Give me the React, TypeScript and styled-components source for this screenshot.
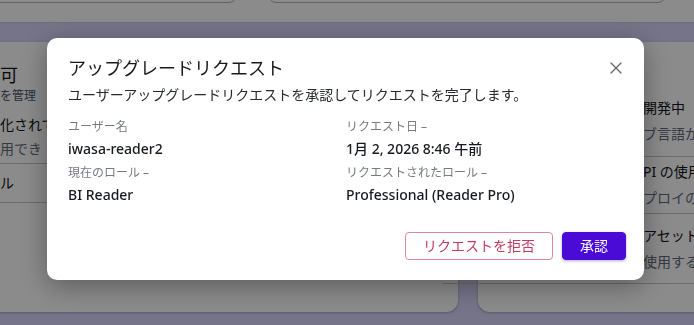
import React from "react";
import styled, { createGlobalStyle } from "styled-components";

const Global = createGlobalStyle`
  html, body { margin: 0; padding: 0; }
  body {
    width: 694px;
    height: 325px;
    overflow: hidden;
    background: #d8d5fb;
    font-family: "Noto Sans", "Noto Sans CJK JP", sans-serif;
  }
`;

const Page = styled.div`
  width: 694px;
  height: 325px;
  overflow: hidden;
  display: flex;
  flex-direction: column;
`;

const Header = styled.div`
  height: 23px;
  box-sizing: border-box;
  flex-shrink: 0;
  background: #ffffff;
  border-bottom: 1px solid #c9c9d0;
  display: flex;
  align-items: flex-end;
  gap: 31px;
  padding: 0 0 19px 0;
  margin-left: -20px;
`;

const HeaderInput = styled.div<{ $w: number }>`
  width: ${(p) => p.$w}px;
  height: 30px;
  flex-shrink: 0;
  box-sizing: border-box;
  border: 1px solid #b4b4bb;
  border-radius: 8px;
`;

const Cards = styled.div`
  display: flex;
  gap: 20px;
  margin-top: 19px;
  height: 270px;
`;

const Card = styled.div<{ $w: number; $shift?: number; $pad: number }>`
  width: ${(p) => p.$w}px;
  flex-shrink: 0;
  margin-left: ${(p) => p.$shift || 0}px;
  background: #ffffff;
  border-radius: 12px;
  box-shadow: 0 1px 3px rgba(0, 0, 0, 0.25);
  padding-left: ${(p) => p.$pad}px;
  box-sizing: border-box;
  display: flex;
  flex-direction: column;
`;

const CardTitle = styled.div<{ $top: number }>`
  margin-top: ${(p) => p.$top}px;
  font-size: 18px;
  line-height: 24px;
  color: #0f141a;
  white-space: nowrap;
`;

const CardSub = styled.div`
  font-size: 12px;
  line-height: 18px;
  color: #4b5563;
  white-space: nowrap;
`;

const Row = styled.div<{ $h: number; $first?: number; $gap?: number }>`
  height: ${(p) => p.$h}px;
  margin-top: ${(p) => p.$first || 0}px;
  margin-left: -200px;
  padding-left: 200px;
  border-bottom: 1px solid #c6c6cd;
  display: flex;
  flex-direction: column;
  justify-content: center;
  gap: ${(p) => p.$gap ?? 4}px;
  white-space: nowrap;
  overflow: hidden;
`;

const RowName = styled.div`
  font-size: 14px;
  line-height: 22px;
  color: #0f141a;
`;

const RowDesc = styled.div`
  font-size: 14px;
  line-height: 22px;
  color: #5f6b7a;
`;

const Overlay = styled.div`
  position: fixed;
  inset: 0;
  background: rgba(0, 0, 0, 0.455);
  display: flex;
  justify-content: center;
  align-items: flex-start;
  padding-top: 38px;
`;

const Modal = styled.div`
  width: 597px;
  margin-left: -3px;
  box-sizing: border-box;
  background: #ffffff;
  border-radius: 10px;
  box-shadow: 0 6px 28px rgba(0, 0, 0, 0.35);
  padding: 17px 18px 20px 21px;
  display: flex;
  flex-direction: column;
`;

const ModalHeader = styled.div`
  display: flex;
  justify-content: space-between;
  align-items: center;
`;

const Title = styled.h2`
  margin: 0;
  font-size: 18px;
  line-height: 26px;
  font-weight: 400;
  color: #16191f;
`;

const CloseButton = styled.button`
  border: 0;
  background: none;
  padding: 0;
  width: 16px;
  height: 16px;
  margin-right: 2px;
  display: flex;
  align-items: center;
  justify-content: center;
  color: #5f6368;
  cursor: pointer;
`;

const Subtitle = styled.p`
  margin: 4px 0 0;
  font-size: 14px;
  line-height: 20px;
  color: #262a30;
`;

const Details = styled.div`
  margin-top: 12px;
  display: grid;
  grid-template-columns: 278px 1fr;
  row-gap: 2px;
`;

const Field = styled.div`
  display: flex;
  flex-direction: column;
`;

const Label = styled.div`
  font-size: 12px;
  line-height: 20px;
  color: #767b82;
`;

const Value = styled.div`
  font-size: 14px;
  line-height: 24px;
  font-weight: 500;
  color: #16191f;
`;

const Actions = styled.div`
  margin-top: 25px;
  display: flex;
  justify-content: flex-end;
  gap: 9px;
`;

const Button = styled.button<{ $primary?: boolean }>`
  height: 28px;
  box-sizing: border-box;
  padding: 0 17px;
  border-radius: 4px;
  font-family: inherit;
  font-size: 14px;
  line-height: 20px;
  cursor: pointer;
  border: 1px solid ${(p) => (p.$primary ? "#4b0bd6" : "#d9899c")};
  background: ${(p) => (p.$primary ? "#4b0bd6" : "#ffffff")};
  color: ${(p) => (p.$primary ? "#ffffff" : "#c23a5e")};
  box-shadow: ${(p) => (p.$primary ? "0 1px 3px rgba(40, 0, 120, 0.35)" : "none")};
`;

export default function App() {
  return (
    <>
      <Global />
      <Page>
        <Header>
          <HeaderInput $w={257} />
          <HeaderInput $w={398} />
        </Header>
        <Cards>
          <Card $w={478} $shift={-20} $pad={20}>
            <CardTitle $top={21}>可</CardTitle>
            <CardSub>を管理</CardSub>
            <Row $h={52} $first={6} $gap={2}>
              <RowName>化されて</RowName>
              <RowDesc>用でき</RowDesc>
            </Row>
            <Row $h={38}>
              <RowName>ル</RowName>
            </Row>
          </Card>
          <Card $w={260} $pad={165}>
            <Row $h={71} $first={43}>
              <RowName>開発中</RowName>
              <RowDesc>ブ言語か</RowDesc>
            </Row>
            <Row $h={56}>
              <RowName>PI の使用</RowName>
              <RowDesc>プロイの</RowDesc>
            </Row>
            <Row $h={69}>
              <RowName>アセット</RowName>
              <RowDesc>使用する</RowDesc>
            </Row>
          </Card>
        </Cards>
      </Page>
      <Overlay>
        <Modal role="dialog" aria-modal="true">
          <ModalHeader>
            <Title>アップグレードリクエスト</Title>
            <CloseButton aria-label="閉じる">
              <svg width="12" height="12" viewBox="0 0 12 12" fill="none">
                <path d="M1 1L11 11M11 1L1 11" stroke="currentColor" strokeWidth="1.3" strokeLinecap="round" />
              </svg>
            </CloseButton>
          </ModalHeader>
          <Subtitle>ユーザーアップグレードリクエストを承認してリクエストを完了します。</Subtitle>
          <Details>
            <Field>
              <Label>ユーザー名</Label>
              <Value>iwasa-reader2</Value>
            </Field>
            <Field>
              <Label>リクエスト日 –</Label>
              <Value>1月 2, 2026 8:46 午前</Value>
            </Field>
            <Field>
              <Label>現在のロール –</Label>
              <Value>BI Reader</Value>
            </Field>
            <Field>
              <Label>リクエストされたロール –</Label>
              <Value>Professional (Reader Pro)</Value>
            </Field>
          </Details>
          <Actions>
            <Button>リクエストを拒否</Button>
            <Button $primary>承認</Button>
          </Actions>
        </Modal>
      </Overlay>
    </>
  );
}
